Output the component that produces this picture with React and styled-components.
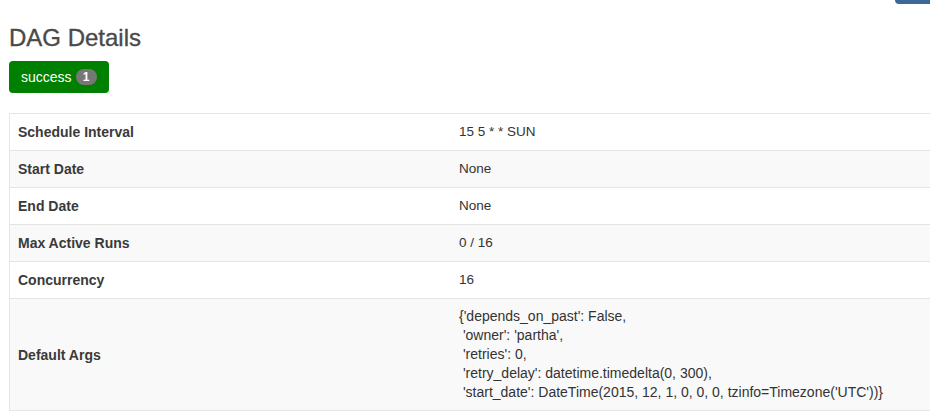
import React from "react";
import styled, { createGlobalStyle } from "styled-components";

const Global = createGlobalStyle`
  html, body {
    margin: 0;
    padding: 0;
    background: #fff;
    overflow: hidden;
  }
  body {
    font-family: "Liberation Sans", Arial, Helvetica, sans-serif;
    color: #333;
  }
`;

const Page = styled.div`
  width: 930px;
  height: 412px;
  overflow: hidden;
  padding-left: 9px;
  box-sizing: border-box;
  position: relative;
`;

const TopBar = styled.div`
  display: flex;
  justify-content: flex-end;
  height: 0;
`;

const TopButton = styled.div`
  width: 40px;
  height: 30px;
  margin-top: -26px;
  margin-right: -5px;
  background: #3b6894;
  border-radius: 4px;
`;

const Title = styled.h2`
  margin: 25px 0 10px;
  font-size: 24px;
  line-height: 26px;
  font-weight: 500;
  color: #4a4a4a;
  -webkit-text-stroke: 0.35px #4a4a4a;
`;

const StateButton = styled.div`
  display: inline-flex;
  align-items: center;
  gap: 4px;
  height: 32px;
  box-sizing: border-box;
  padding: 0 12px;
  background: #008000;
  border-radius: 4px;
  color: #fff;
  font-size: 14px;
  line-height: 20px;
`;

const Badge = styled.span`
  display: inline-block;
  min-width: 7px;
  padding: 2px 7px;
  border-radius: 10px;
  background: #777;
  color: #fff;
  font-size: 12px;
  font-weight: bold;
  line-height: 12px;
  text-align: center;
`;

const Table = styled.div`
  margin-top: 20px;
  width: 1000px;
  border-left: 1px solid #e6e6e6;
  border-bottom: 1px solid #e6e6e6;
`;

const Row = styled.div`
  display: grid;
  grid-template-columns: 441px 1fr;
  border-top: 1px solid #e4e4e4;
  background: ${(p) => (p.$striped ? "#f9f9f9" : "#fff")};
`;

const Label = styled.div`
  padding: 8px;
  font-size: 14px;
  font-weight: bold;
  line-height: 20px;
  color: #3a3a3a;
  display: flex;
  align-items: center;
`;

const Value = styled.div`
  padding: 8px;
  font-size: ${(p) => (p.$pre ? "14px" : "13.5px")};
  line-height: ${(p) => (p.$pre ? "19px" : "20px")};
  white-space: ${(p) => (p.$pre ? "pre" : "normal")};
  color: #333;
`;

const rows = [
  ["Schedule Interval", "15 5 * * SUN"],
  ["Start Date", "None"],
  ["End Date", "None"],
  ["Max Active Runs", "0 / 16"],
  ["Concurrency", "16"],
  [
    "Default Args",
    "{'depends_on_past': False,\n 'owner': 'partha',\n 'retries': 0,\n 'retry_delay': datetime.timedelta(0, 300),\n 'start_date': DateTime(2015, 12, 1, 0, 0, 0, tzinfo=Timezone('UTC'))}",
    true,
  ],
];

export default function App() {
  return (
    <>
      <Global />
      <Page>
        <TopBar>
          <TopButton />
        </TopBar>
        <Title>DAG Details</Title>
        <StateButton>
          success <Badge>1</Badge>
        </StateButton>
        <Table>
          {rows.map(([k, v, pre], i) => (
            <Row key={k} $striped={i % 2 === 1}>
              <Label>{k}</Label>
              <Value $pre={pre}>{v}</Value>
            </Row>
          ))}
        </Table>
      </Page>
    </>
  );
}
